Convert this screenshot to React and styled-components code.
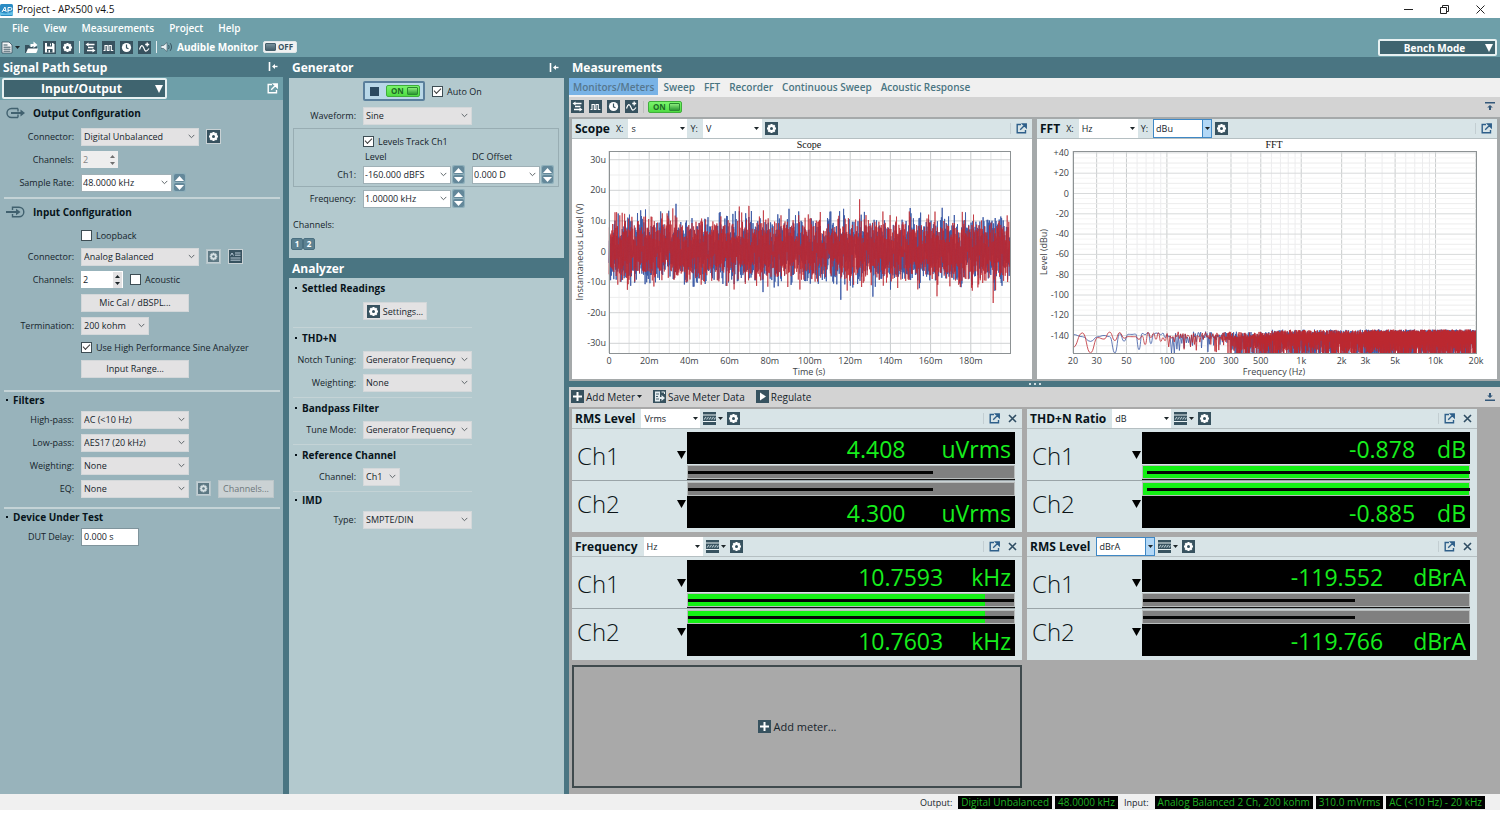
import React from "react";
import styled, { createGlobalStyle, css } from "styled-components";

const c = {
  bar: "#6e9fa9",
  head: "#4a7582",
  deep: "#3f646f",
  left: "#98b3bb",
  mid: "#b3c9ce",
  pane: "#d8e4e7",
  icon: "#37525f",
  ink: "#16242b",
  control: "#e3e2e3",
  green: "#14f014",
  value: "#17ee1d",
};

const Global = createGlobalStyle`
  *, *::before, *::after { box-sizing: border-box; }
  body { margin: 0; background: #fff; }
  body, button, input, select {
    font-family: "Open Sans", "Noto Sans", sans-serif;
    font-size: 9px;
    color: ${c.ink};
  }
  button, input, select { margin: 0; padding: 0; border-radius: 0; }
  h1, h2, h3, p { margin: 0; }
  svg { display: block; flex: none; }
`;

/* ---------- window frame ---------- */

const Window = styled.div`
  display: flex;
  flex-direction: column;
  min-width: 1180px;
`;
const TitleBar = styled.header`
  display: flex;
  align-items: center;
  gap: 4px;
  height: 18px;
  padding: 0 14px 0 0;
  background: #fff;
`;
const AppTitle = styled.h1`
  flex: 1;
  font-size: 10px;
  font-weight: 400;
  color: #111;
`;
const WindowButton = styled.button`
  display: grid;
  place-items: center;
  width: 12px;
  height: 14px;
  margin-left: 20px;
  border: 0;
  background: none;
`;
const CommandArea = styled.div`
  display: flex;
  align-items: flex-end;
  justify-content: space-between;
  height: 39px;
  padding-right: 3px;
  background: ${c.bar};
`;
const Menu = styled.nav`
  display: flex;
  align-items: center;
  gap: 15px;
  height: 20px;
  padding-left: 12px;
`;
const MenuLink = styled.a`
  font-size: 10px;
  font-weight: 600;
  color: #fff;
  text-decoration: none;
`;
const ToolRow = styled.div`
  display: flex;
  align-items: center;
  height: 18px;
  margin-bottom: 1px;
  gap: 5px;
  padding-left: 1px;
`;
const IconButton = styled.button`
  display: flex;
  align-items: center;
  gap: ${(p) => (p.$strong ? "4px" : "2px")};
  padding: 0;
  border: 0;
  background: none;
  font-size: 10px;
  color: ${(p) => p.$color || c.ink};
  ${(p) => p.$strong && css`font-weight: 700;`}
`;
const Separator = styled.span`
  width: 1px;
  height: 12px;
  margin-right: -1px;
  background: ${(p) => p.$color || "#e6eef0"};
`;
const ModeSelect = styled.button`
  display: flex;
  align-items: center;
  width: ${(p) => p.$width};
  height: ${(p) => p.$height};
  margin: ${(p) => p.$margin || 0};
  padding: 0 2px 0 4px;
  border: 2px solid #e8f1f2;
  border-radius: 2px;
  background: ${c.deep};
  color: #fff;
  font-size: ${(p) => p.$size};
  font-weight: 700;
  line-height: 12px;
  span { flex: 1; text-align: center; }
`;

/* ---------- columns ---------- */

const Columns = styled.main`
  display: grid;
  grid-template-columns: 289px 280px minmax(600px, 1fr);
  background: ${c.head};
`;
const Column = styled.section`
  display: flex;
  flex-direction: column;
  min-width: 0;
  border-right: ${(p) => p.$edge || "0"} solid ${c.head};
  background: ${(p) => p.$bg};
`;
const Heading = styled.h2`
  display: flex;
  align-items: center;
  justify-content: space-between;
  height: ${(p) => p.$height || "20px"};
  padding: 0 5px 0 3px;
  background: ${c.head};
  color: #fff;
  font-size: 12px;
  font-weight: 700;
`;
const PathBar = styled.div`
  display: flex;
  align-items: center;
  justify-content: space-between;
  height: 23px;
  padding: 0 5px 0 2px;
  background: ${c.bar};
`;
const Group = styled.section`
  margin: 0 ${(p) => p.$right || "3px"} 0 4px;
  padding-bottom: ${(p) => p.$bottom || "3px"};
  border-bottom: ${(p) => (p.$last ? "0" : p.$line || "2px")} solid #c4d3d6;
`;
const GroupTitle = styled.h3`
  display: flex;
  align-items: center;
  gap: ${(p) => (p.$icon ? "8px" : "5px")};
  height: ${(p) => p.$height};
  padding-left: 2px;
  font-size: 10px;
  font-weight: 700;
  color: #07131a;
  &::before {
    content: "";
    display: ${(p) => (p.$icon ? "none" : "block")};
    width: 2px;
    height: 2px;
    background: #07131a;
  }
`;
const Field = styled.div`
  display: flex;
  align-items: center;
  height: ${(p) => p.$height || "23px"};
  gap: 7px;
`;
const FieldLabel = styled.label`
  width: ${(p) => p.$width || "70px"};
  flex: none;
  text-align: right;
  white-space: nowrap;
`;
const Indent = styled.span`
  width: ${(p) => p.$width || "70px"};
  flex: none;
`;
const SelectBox = styled.span`
  position: relative;
  display: flex;
  width: ${(p) => p.$width};
  height: 18px;
  flex: none;
  svg { position: absolute; right: 4px; top: 6px; pointer-events: none; }
  select {
    appearance: none;
    width: 100%;
    padding: 0 2px;
    border: 1px solid #d4d8da;
    background: ${c.control};
  }
`;
const ComboBox = styled.span`
  display: flex;
  align-items: center;
  width: ${(p) => p.$width};
  height: 18px;
  padding-right: 3px;
  border: 1px solid #9fb0b6;
  background: #fff;
  input {
    flex: 1;
    min-width: 0;
    height: 14px;
    padding-left: 1px;
    border: 0;
    background: none;
  }
  button { border: 0; background: none; }
`;
const TextBox = styled.input`
  width: ${(p) => p.$width};
  height: 18px;
  padding-left: 2px;
  border: 1px solid #7f949c;
  background: #fff;
`;
const NumberBox = styled.span`
  display: flex;
  align-items: center;
  justify-content: space-between;
  width: ${(p) => p.$width};
  height: 17px;
  padding-right: 1px;
  background: ${(p) => (p.$off ? "#eeeeee" : "#fff")};
  input {
    width: 18px;
    height: 15px;
    padding-left: 2px;
    border: 0;
    background: none;
    color: ${(p) => (p.$off ? "#858585" : c.ink)};
  }
`;
const PushButton = styled.button`
  display: flex;
  align-items: center;
  justify-content: center;
  gap: 3px;
  width: ${(p) => p.$width};
  height: 18px;
  border: 1px solid #d3d7d9;
  background: ${c.control};
  &:disabled { color: #6d777b; background: #cbd2d4; border-color: #bcc6c9; }
`;
const SquareButton = styled.button`
  display: grid;
  place-items: center;
  width: 15px;
  height: 15px;
  border: 1px solid #c9d2d5;
  background: #dfe3e5;
  &:disabled { opacity: 0.6; }
`;
const CheckLabel = styled.label`
  display: flex;
  align-items: center;
  gap: 4px;
  white-space: nowrap;
  input {
    appearance: none;
    display: grid;
    place-items: center;
    width: 11px;
    height: 11px;
    border: 1px solid #3d4d54;
    background: #fff;
  }
  input:checked::before {
    content: "";
    width: 7px;
    height: 4px;
    margin-top: -2px;
    border: solid #3c3c3c;
    border-width: 0 0 1px 1px;
    transform: rotate(-45deg);
  }
`;
const Stepper = styled.span`
  display: grid;
  grid-template-rows: 8px 8px;
  gap: 1px;
  width: 13px;
  margin-left: -6px;
  padding: 1px;
  height: 19px;
  border-radius: 2px;
  background: #8fb0bb;
  button {
    display: grid;
    place-items: center;
    border: 0;
    border-radius: 2px;
    background: #64889a;
  }
`;
const OutputSwitch = styled.div`
  display: flex;
  align-items: center;
  justify-content: space-between;
  width: 62px;
  height: 20px;
  padding: 0 3px 0 5px;
  border: 2px solid #5a7f9c;
  border-radius: 2px;
  background: #b9d8e8;
`;
const StopMark = styled.button`
  width: 9px;
  height: 9px;
  border: 0;
  background: #2b4a60;
`;
const Toggle = styled.button`
  display: flex;
  align-items: center;
  justify-content: space-between;
  flex-direction: ${(p) => (p.$on ? "row" : "row-reverse")};
  width: 34px;
  height: 12px;
  padding: 0 1px 0 4px;
  border: 1px solid ${(p) => (p.$on ? "#3fae3a" : "#dfe6e8")};
  border-radius: 2px;
  background: ${(p) => (p.$on ? "linear-gradient(#7af56c, #4fdc43)" : "#f0f2f2")};
  color: ${(p) => (p.$on ? "#1c6a26" : "#37525f")};
  font-size: 8px;
  font-weight: 700;
  line-height: 10px;
  ${(p) => !p.$on && css`padding: 0 3px 0 1px;`}
  &::after {
    content: "";
    width: 11px;
    height: 8px;
    border: 1px solid ${(p) => (p.$on ? "#2a8a31" : "#455f6b")};
    border-radius: 1px;
    background: ${(p) => (p.$on ? "linear-gradient(#8bea7c, #2d9a34)" : "linear-gradient(#76909a, #455f6b)")};
  }
`;
const LevelBox = styled.fieldset`
  min-width: 0;
  margin: 1px 5px 0 4px;
  padding: 2px 0 0;
  border: 1px solid #98adb3;
`;
const LevelHeads = styled.div`
  display: grid;
  grid-template-columns: 107px auto;
  height: 12px;
  padding-left: 71px;
  line-height: 12px;
`;
const ChannelBlock = styled.div`
  padding: 8px 0 8px 2px;
  p { height: 16px; padding-left: 2px; line-height: 14px; }
`;
const ChannelKeys = styled.div`
  display: flex;
  padding-top: 4px;
  button {
    width: 12px;
    height: 12px;
    border: 1px solid #4a6f80;
    border-radius: 2px;
    background: #5c8191;
    color: #fff;
    font-size: 8px;
    font-weight: 700;
    line-height: 10px;
  }
`;
const ColumnBody = styled.div`
  background: ${(p) => p.$bg};
`;

/* ---------- measurements ---------- */

const Tabs = styled.div`
  display: flex;
  height: 19px;
  background: #f0f0f0;
`;
const Tab = styled.button`
  height: 17px;
  padding: 0 4px 0 ${(p) => (p.$active ? "4px" : "5px")};
  border: 0;
  background: ${(p) => (p.$active ? "#79b3e6" : "none")};
  color: ${(p) => (p.$active ? "#55778f" : c.head)};
  font-size: 10px;
  font-weight: 600;
`;
const ToolStrip = styled.div`
  display: flex;
  align-items: center;
  gap: ${(p) => p.$gap || "5px"};
  height: 20px;
  padding: 0 5px 1px 2px;
  background: #d3d3d3;
`;
const Spring = styled.span`
  flex: 1;
`;
const GraphArea = styled.div`
  display: grid;
  grid-template-columns: 1fr 1fr;
  gap: 5px;
  padding: 2px 3px;
  background: #a5a9aa;
`;
const Pane = styled.article`
  min-width: 0;
  background: ${(p) => p.$bg || "#fff"};
`;
const PaneHead = styled.header`
  display: flex;
  align-items: center;
  height: 20px;
  padding: 0 5px 0 3px;
  border-bottom: 1px solid #b5bfc2;
  background: ${c.pane};
  h3 { margin-right: 6px; font-size: 12px; font-weight: 700; color: #07131a; }
  label { margin-right: 5px; }
`;
const UnitBox = styled.span`
  position: relative;
  display: flex;
  width: 59px;
  height: 19px;
  margin-right: 3px;
  select {
    appearance: none;
    width: 100%;
    padding: 0 ${(p) => (p.$focus ? "2px" : "3px")};
    border: ${(p) => (p.$focus ? "1px solid #3f88c5" : "0")};
    background: #fff;
  }
  span {
    position: absolute;
    top: 0;
    right: 0;
    display: grid;
    place-items: center;
    width: 10px;
    height: 19px;
    border: ${(p) => (p.$focus ? "1px solid #3f88c5" : "0")};
    background: ${(p) => (p.$focus ? "#b3d8f6" : "none")};
    pointer-events: none;
  }
`;
const HeadTools = styled.div`
  display: flex;
  align-items: center;
  gap: 8px;
  margin-left: auto;
  padding-left: 5px;
  border-left: 1px solid #c3ced2;
`;
const Chart = styled.svg`
  width: 100%;
  height: auto;
  text { font-size: 9px; fill: #3d4347; }
  .title { font-family: "Liberation Serif", serif; font-size: 10px; fill: #111; }
`;
const Splitter = styled.div`
  display: grid;
  place-items: center;
  height: 6px;
  background: ${c.head};
`;
const MeterArea = styled.div`
  display: grid;
  grid-template-columns: 1fr 1fr;
  gap: 5px;
  padding: 2px 23px 6px 3px;
  background: #a9a9a9;
`;
const MeterBody = styled.div`
  padding: 3px 7px 4px 0;
`;
const MeterRow = styled.div`
  display: grid;
  grid-template-columns: 115px 1fr;
  height: 48px;
  & + & { border-top: 1px solid #9aa4a8; }
`;
const ChannelName = styled.div`
  display: flex;
  align-items: center;
  justify-content: space-between;
  padding: 0 1px 2px 5px;
  font-size: 24px;
  font-weight: 300;
  color: #0c1418;
`;
const Readout = styled.div`
  display: flex;
  flex-direction: ${(p) => (p.$flip ? "column-reverse" : "column")};
  justify-content: space-between;
  border-${(p) => (p.$flip ? "top: 1px solid #c9d2d4" : "bottom: 1px solid #111")};
`;
const Value = styled.output`
  display: flex;
  align-items: center;
  justify-content: flex-end;
  gap: ${(p) => p.$gap};
  height: 32px;
  padding: 2px 4px 0 0;
  background: #000;
  color: ${c.value};
  font-size: 23px;
  line-height: 30px;
  white-space: nowrap;
`;
const Track = styled.div`
  position: relative;
  height: 14px;
  border: 1px solid #b9bdbd;
  background: #808080;
`;
const Fill = styled.div`
  height: 100%;
  background: ${c.green};
`;
const Line = styled.div`
  position: absolute;
  top: 5px;
  left: ${(p) => p.$start || 0};
  height: 3px;
  background: #050505;
`;
const AddCell = styled.button`
  display: flex;
  align-items: center;
  justify-content: center;
  gap: 3px;
  height: 123px;
  border: 2px solid #3f4a4d;
  background: #a9a9a9;
  font-size: 11px;
`;
const StatusBar = styled.footer`
  display: flex;
  align-items: center;
  justify-content: flex-end;
  gap: 3px;
  height: 16px;
  padding-right: 15px;
  background: #f0f0f0;
  font-size: 9px;
  span { margin: 0 3px; }
`;
const StatusValue = styled.output`
  height: 13px;
  padding: 0 3px;
  background: #000;
  color: #1fae22;
  font-size: 10px;
  line-height: 12px;
`;

/* ---------- icons ---------- */

const Tile = ({ children, size = 13, bg = c.icon }) => (
  <svg width={size} height={size} viewBox="0 0 13 13" aria-hidden="true">
    <rect width="13" height="13" fill={bg} />
    {children}
  </svg>
);
const Gear = ({ bg = c.icon, size }) => (
  <Tile bg={bg} size={size}>
    {[0, 45, 90, 135].map((a) => (
      <rect key={a} x="5.4" y="2" width="2.2" height="9" fill="#fff" transform={`rotate(${a} 6.5 6.5)`} />
    ))}
    <circle cx="6.5" cy="6.5" r="3.5" fill="#fff" />
    <circle cx="6.5" cy="6.5" r="1.5" fill={bg} />
  </Tile>
);
const Swap = () => (
  <Tile>
    <path d="M4 3.500h6.500M4 6.500h5.500M3 9.500h6" stroke="#fff" strokeWidth="1.400" fill="none" />
    <path d="M1.500 3.500L4.500 1.500v4zM11.500 9.500l-3-2v4z" fill="#fff" />
  </Tile>
);
const Square = () => (
  <Tile>
    <path d="M1.500 9.500h1.500v-5h2.300v5h1.700v-5h2.300v5h2" stroke="#fff" strokeWidth="1.1" fill="none" />
  </Tile>
);
const Clock = () => (
  <Tile>
    <circle cx="6.5" cy="6.5" r="4.600" fill="#fff" />
    <path d="M6.500 3.500v3.300l2 1" stroke={c.icon} strokeWidth="1.200" fill="none" />
  </Tile>
);
const Sine = () => (
  <Tile>
    <path d="M1.500 8.500c1.500-5 3-5 4.300-1.500s2.200 4.500 5.200.5" stroke="#fff" strokeWidth="1.200" fill="none" />
    <path d="M9.200 1.500v4M7.200 3.500h4" stroke="#fff" strokeWidth="1.300" />
  </Tile>
);
const NewDoc = () => (
  <svg width="12" height="13" viewBox="0 0 12 13" aria-hidden="true">
    <path d="M1 1h7l3 3v8H1z" fill="#f4f7f8" stroke={c.icon} strokeWidth=".8" />
    <path d="M2.500 4h4M2.500 6.200h7M2.500 8.200h7M2.500 10.200h7" stroke={c.icon} strokeWidth="1" />
  </svg>
);
const OpenDoc = () => (
  <svg width="13" height="13" viewBox="0 0 13 13" aria-hidden="true">
    <path d="M0 4h4l1 1.500h7V12H0z" fill={c.icon} />
    <path d="M1 12l2-4.500h10L11.500 12z" fill="#fff" />
    <path d="M5.500 6V3h3V.500L12.500 4 8.500 7V5H7.500v1z" fill="#fff" />
  </svg>
);
const Save = () => (
  <Tile>
    <path d="M2 2h8l1.500 1.500V11.500H2z" fill="#fff" />
    <path d="M4 2h5v3.500H4zM4 8h5.500v3.500H4z" fill={c.icon} />
    <path d="M7 2.500h1v2H7zM5.500 9h1.500v2.500H5.500z" fill="#fff" />
  </Tile>
);
const Speaker = () => (
  <svg width="12" height="12" viewBox="0 0 12 12" aria-hidden="true">
    <path d="M0 4.500h2.500L6 1.500v9L2.500 7.500H0z" fill="#e8f0f2" stroke={c.icon} strokeWidth=".6" />
    <path d="M7.500 4c.8 1.200.8 2.800 0 4M9.200 2.200c1.700 2.200 1.700 5.400 0 7.600" stroke={c.icon} fill="none" />
  </svg>
);
const PopOut = ({ color = "#2e5f8a" }) => (
  <svg width="11" height="11" viewBox="0 0 11 11" aria-hidden="true">
    <path d="M5 1.500H1.200v8.300h8.300V7" stroke={color} strokeWidth="1.400" fill="none" />
    <path d="M6.500 1h3.800v3.800zM4.200 6.800l4-4" stroke={color} strokeWidth="1.300" fill={color} />
  </svg>
);
const Collapse = () => (
  <svg width="10" height="10" viewBox="0 0 10 10" aria-hidden="true">
    <path d="M1.500 0v9" stroke="#fff" strokeWidth="1.600" />
    <path d="M6 4.500h3.500" stroke="#fff" strokeWidth="1.400" />
    <path d="M4 4.500l3-2.500v5z" fill="#fff" />
  </svg>
);
const Fold = ({ up }) => (
  <svg width="10" height="9" viewBox="0 0 10 9" aria-hidden="true">
    <g transform={up ? "rotate(180 5 4.500)" : undefined} fill="#33587a">
      <path d="M0 0h10v1.600H0zM5 3l2.800 2.600H6V8H4V5.600H2.200z" />
    </g>
  </svg>
);
const Close = () => (
  <svg width="9" height="9" viewBox="0 0 9 9" aria-hidden="true">
    <path d="M1 1l7 7M8 1L1 8" stroke="#2f4d63" strokeWidth="1.600" />
  </svg>
);
const Chevron = () => (
  <svg width="7" height="5" viewBox="0 0 7 5" aria-hidden="true">
    <path d="M.7.9l2.800 2.800L6.300.9" stroke="#5f676b" strokeWidth="1" fill="none" />
  </svg>
);
const Caret = ({ w = 5, h = 3, color = "#1d2529", up }) => (
  <svg width={w} height={h} viewBox="0 0 10 10" preserveAspectRatio="none" aria-hidden="true">
    <path d={up ? "M0 10h10L5 0z" : "M0 0h10L5 10z"} fill={color} />
  </svg>
);
const MeterView = () => (
  <Tile>
    <path d="M0 2.500h13v1H0zM0 9h13v1H0z" fill="#e8f0f2" />
    <path d="M1 7.500l2-2.500M3.500 7.500l2-2.500M6 7.500l2-2.500M8.500 7.500l2-2.500M11 7.500l1.500-2" stroke="#b9cad0" strokeWidth="1.100" fill="none" />
  </Tile>
);
const Teds = () => (
  <Tile size={13}>
    <path d="M1.500 5.500L3 3l1.500 2.500M6 3h5.500M6 5.200h5.500M1.500 8h10M1.500 10.200h10" stroke="#b9cad6" strokeWidth="1" fill="none" />
  </Tile>
);
const Plus = ({ size }) => (
  <Tile size={size}>
    <path d="M6.500 2v9M2 6.500h9" stroke="#fff" strokeWidth="2" />
  </Tile>
);
const Export = () => (
  <Tile>
    <path d="M2 1.500h5v10H2z" fill="#e5edf0" />
    <path d="M3 4h3M3 6.500h2M3 9h3" stroke={c.icon} strokeWidth=".9" />
    <path d="M6 7h2.500V5l3.500 3-3.500 3V9H6z" fill="#e5edf0" />
    <path d="M8.500 2h3v2" stroke="#e5edf0" fill="none" />
  </Tile>
);
const Play = () => (
  <Tile>
    <path d="M4 2.500l6 4-6 4z" fill="#fff" />
  </Tile>
);
const OutIcon = () => (
  <svg width="19" height="12" viewBox="0 0 19 12" aria-hidden="true">
    <path d="M12 1.500H5.500a4.500 4.500 0 0 0 0 9H12" stroke="#41616f" strokeWidth="1.400" fill="none" />
    <path d="M12 1.500v3M12 7.500v3" stroke="#41616f" strokeWidth="1.400" />
    <path d="M5 6h12" stroke="#41616f" strokeWidth="2" />
    <path d="M14.500 2.500L19 6l-4.500 3.500z" fill="#41616f" />
  </svg>
);
const InIcon = () => (
  <svg width="19" height="12" viewBox="0 0 19 12" aria-hidden="true">
    <path d="M6.500 4V1.200H13a4.800 4.800 0 0 1 0 9.600H6.500V8" stroke="#41616f" strokeWidth="1.400" fill="none" />
    <path d="M0 6h12" stroke="#41616f" strokeWidth="2" />
    <path d="M10 2.800L14.500 6 10 9.200z" fill="#41616f" />
  </svg>
);
const Logo = () => (
  <svg width="13" height="13" viewBox="0 0 13 13" aria-hidden="true">
    <rect y="1" width="13" height="12" rx="1.500" fill="#2b8cc4" />
    <path d="M0 9c3 2 9 2 13-1v4H0z" fill="#63bfe6" />
    <path d="M2 9l3-5 1.200 5M3.300 7.500h2.500M8 9.500V4.500h2.500a1.300 1.300 0 0 1 0 2.800H8" stroke="#fff" strokeWidth="1" fill="none" />
  </svg>
);

/* ---------- small composed controls ---------- */

const Select = ({ id, value, width }) => (
  <SelectBox $width={width}>
    <select id={id} defaultValue={value}>
      <option>{value}</option>
    </select>
    <Chevron />
  </SelectBox>
);
const Combo = ({ id, value, width, label }) => (
  <ComboBox $width={width}>
    <input id={id} defaultValue={value} aria-label={label} />
    <button aria-label="Show choices"><Chevron /></button>
  </ComboBox>
);
const Steps = () => (
  <Stepper>
    <button aria-label="Increase"><Caret up w={9} h={5} color="#fff" /></button>
    <button aria-label="Decrease"><Caret w={9} h={5} color="#fff" /></button>
  </Stepper>
);
const SpinWrap = styled.span`
  display: grid;
  gap: 4px;
  padding: 3px 2px;
  background: ${(p) => (p.$off ? "none" : "#e3e2e3")};
`;
const Spin = ({ id, value, off, width }) => (
  <NumberBox $off={off} $width={width}>
    <input id={id} defaultValue={value} disabled={off} />
    <SpinWrap $off={off}>
      <Caret up color={off ? "#707070" : undefined} />
      <Caret color={off ? "#707070" : undefined} />
    </SpinWrap>
  </NumberBox>
);
const Check = ({ children, on }) => (
  <CheckLabel>
    <input type="checkbox" defaultChecked={on} />
    {children}
  </CheckLabel>
);
const Unit = ({ id, value, focus, label }) => (
  <UnitBox $focus={focus}>
    <select id={id} defaultValue={value} aria-label={label}>
      <option>{value}</option>
    </select>
    <span><Caret w={5} h={3} /></span>
  </UnitBox>
);
const SelectField = ({ id, label, value, width, labelWidth }) => (
  <Field>
    <FieldLabel htmlFor={id} $width={labelWidth}>{label}</FieldLabel>
    <Select id={id} value={value} width={width} />
  </Field>
);

/* ---------- chart data ---------- */

const random = (seed) => {
  let s = seed;
  return () => {
    s = (s * 1664525 + 1013904223) % 4294967296;
    return s / 4294967296;
  };
};
const bell = (r) => r() + r() + r() + r() + r() + r() - 3;

const scopeTrace = (seed) => {
  const r = random(seed);
  const pts = [];
  const n = 1000;
  for (let i = 0; i <= n; i++) {
    const sign = i % 2 ? 1 : -1;
    const spike = r() < 0.03 ? 4 : 0;
    const level = sign * (6.6 + bell(r) * 3.8 + spike) + 0.4;
    pts.push(`${(37 + (401 * i) / n).toFixed(1)},${(112.5 - level * 3.06).toFixed(1)}`);
  }
  return pts.join(" ");
};
const fx = (f) => 36 + (403 * Math.log10(f / 20)) / 3;
const fy = (db) => 54.500 - db * 1.015;
const fftTrace = (seed) => {
  const r = random(seed);
  const pts = [];
  let f = 20;
  let i = 0;
  while (f < 20000) {
    const high = -134 - r() * (f > 3000 ? 3 : 6) - (f < 600 ? 2 : 0);
    const reach = f > 3000 ? 12 + r() * 18 : f > 300 ? 5 + r() * 22 : r() < 0.35 ? 6 + r() * 14 : r() * 6;
    const db = i % 2 ? high : high - reach;
    pts.push([fx(f), Math.min(214, fy(db))]);
    f += Math.max(f < 100 ? 3.5 : 2.6, f * 0.0042);
    i += 1;
  }
  /* Widely spaced low-frequency bins are joined by curves, the rest by lines. */
  let d = `M${pts[0][0].toFixed(1)} ${pts[0][1].toFixed(1)}`;
  for (let k = 1; k < pts.length; k++) {
    const [x0] = pts[k - 1];
    const y0 = pts[k - 1][1];
    const [x, y] = pts[k];
    if (x - x0 > 2) {
      const m = ((x0 + x) / 2).toFixed(1);
      d += `C${m} ${y0.toFixed(1)} ${m} ${y.toFixed(1)} ${x.toFixed(1)} ${y.toFixed(1)}`;
    } else {
      d += `L${x.toFixed(1)} ${y.toFixed(1)}`;
    }
  }
  return d;
};

const ScopeChart = () => {
  const xs = Array.from({ length: 10 }, (_, i) => i);
  const ys = [30, 20, 10, 0, -10, -20, -30];
  return (
    <Chart viewBox="0 0 460 240" role="img" aria-label="Scope">
      {xs.map((i) => (
        <g key={i}>
          <path d={`M${37 + i * 40.200} 12v202`} stroke="#c9cccd" />
          <path d={`M${57.100 + i * 40.200} 12v202`} stroke="#e0e2e3" />
          <path d={`M${47 + i * 40.200} 12v202M${67.200 + i * 40.200} 12v202`} stroke="#f3f4f4" />
        </g>
      ))}
      {ys.map((v) => (
        <g key={v}>
          <path d={`M37 ${112.500 - v * 3.060}h401`} stroke="#d0d3d4" />
          {v > -30 && <path d={`M37 ${127.800 - v * 3.060}h401`} stroke="#ededed" />}
        </g>
      ))}
      <polyline points={scopeTrace(11)} fill="none" stroke="#3c5aa6" strokeWidth=".9" />
      <polyline points={scopeTrace(87)} fill="none" stroke="#bd2830" strokeWidth=".7" />
      <rect x="37.500" y="12.500" width="401" height="202" fill="none" stroke="#8d9294" />
      <text className="title" x="237" y="9" textAnchor="middle">Scope</text>
      {ys.map((v) => (
        <text key={v} x="34" y={115.500 - v * 3.060} textAnchor="end">{v === 0 ? "0" : `${v}u`}</text>
      ))}
      {xs.map((i) => (
        <text key={i} x={37 + i * 40.200} y="225" textAnchor="middle">{i === 0 ? "0" : `${i * 20}m`}</text>
      ))}
      <text x="237" y="236" textAnchor="middle">Time (s)</text>
      <text transform="translate(11 113) rotate(-90)" textAnchor="middle">Instantaneous Level (V)</text>
    </Chart>
  );
};

const FftChart = () => {
  const major = [[20, "20"], [30, "30"], [50, "50"], [100, "100"], [200, "200"], [300, "300"], [500, "500"], [1000, "1k"], [2000, "2k"], [3000, "3k"], [5000, "5k"], [10000, "10k"], [20000, "20k"]];
  const minor = [40, 60, 70, 80, 90, 400, 600, 700, 800, 900, 4000, 6000, 7000, 8000, 9000];
  const ys = [40, 20, 0, -20, -40, -60, -80, -100, -120, -140];
  return (
    <Chart viewBox="0 0 460 240" role="img" aria-label="FFT">
      {minor.map((f) => <path key={f} d={`M${fx(f)} 12v202`} stroke="#ececee" />)}
      {major.map(([f]) => <path key={f} d={`M${fx(f)} 12v202`} stroke="#c9cccd" />)}
      {ys.map((v) => (
        <g key={v}>
          <path d={`M36 ${fy(v)}h403`} stroke="#d8dadb" />
          <path d={`M36 ${fy(v) + 10.150}h403`} stroke="#ececec" />
          {v > -140 && <path d={`M36 ${fy(v) + 5}h403M36 ${fy(v) + 15}h403`} stroke="#f5f5f5" />}
        </g>
      ))}
      <path d={fftTrace(5)} fill="none" stroke="#3c5aa6" strokeWidth=".8" strokeLinejoin="round" />
      <path d={fftTrace(42)} fill="none" stroke="#bd2830" strokeWidth=".8" strokeLinejoin="round" />
      <rect x="36.500" y="12.500" width="403" height="202" fill="none" stroke="#8d9294" />
      <text className="title" x="237" y="9" textAnchor="middle">FFT</text>
      {ys.map((v) => (
        <text key={v} x="32" y={fy(v) + 3} textAnchor="end">{v > 0 ? `+${v}` : v}</text>
      ))}
      {major.map(([f, t]) => (
        <text key={f} x={fx(f)} y="225" textAnchor="middle">{t}</text>
      ))}
      <text x="237" y="236" textAnchor="middle">Frequency (Hz)</text>
      <text transform="translate(10 113) rotate(-90)" textAnchor="middle">Level (dBu)</text>
    </Chart>
  );
};

const graphs = [
  { id: "scope", title: "Scope", x: "s", y: "V", Plot: ScopeChart },
  { id: "fft", title: "FFT", x: "Hz", y: "dBu", focus: true, Plot: FftChart },
];

const meters = [
  { title: "RMS Level", unit: "Vrms", values: ["4.408", "4.300"], suffix: "uVrms", gap: "36px", fill: 0, line: 75 },
  { title: "THD+N Ratio", unit: "dB", values: ["-0.878", "-0.885"], suffix: "dB", gap: "22px", fill: 100, line: 99, start: "4px" },
  { title: "Frequency", unit: "Hz", values: ["10.7593", "10.7603"], suffix: "kHz", gap: "28px", fill: 91, line: 100 },
  { title: "RMS Level", unit: "dBrA", values: ["-119.552", "-119.766"], suffix: "dBrA", gap: "30px", fill: 0, line: 65, focus: true },
];

const Spacer = styled.span`
  width: 4px;
`;

const Meter = ({ m }) => (
  <Pane $bg={c.pane}>
    <PaneHead>
      <h3>{m.title}</h3>
      <Unit value={m.unit} focus={m.focus} label={`${m.title} unit`} />
      <IconButton aria-label="Meter display"><MeterView /><Caret /></IconButton>
      <Spacer />
      <IconButton aria-label="Meter settings"><Gear /></IconButton>
      <HeadTools>
        <IconButton aria-label="Open in window"><PopOut /></IconButton>
        <IconButton aria-label="Close meter"><Close /></IconButton>
      </HeadTools>
    </PaneHead>
    <MeterBody>
      {m.values.map((v, i) => (
        <MeterRow key={v}>
          <ChannelName>
            <span>Ch{i + 1}</span>
            <Caret w={9} h={8} color="#000" />
          </ChannelName>
          <Readout $flip={i === 1}>
            <Value $gap={m.gap}><span>{v}</span><span>{m.suffix}</span></Value>
            <Track>
              <Fill style={{ width: `${m.fill}%` }} />
              <Line $start={m.start} style={{ width: `${m.line}%` }} />
            </Track>
          </Readout>
        </MeterRow>
      ))}
    </MeterBody>
  </Pane>
);

const tabs = ["Monitors/Meters", "Sweep", "FFT", "Recorder", "Continuous Sweep", "Acoustic Response"];

const GEN = "63px";

export default function App() {
  return (
    <>
      <Global />
      <Window>
        <TitleBar>
          <Logo />
          <AppTitle>Project - APx500 v4.5</AppTitle>
          <WindowButton aria-label="Minimize">
            <svg width="9" height="9" viewBox="0 0 9 9"><path d="M0 4.500h9" stroke="#222" /></svg>
          </WindowButton>
          <WindowButton aria-label="Restore">
            <svg width="9" height="9" viewBox="0 0 9 9"><path d="M.5 2.500h6v6h-6zM2.500 2.500v-2h6v6h-2" stroke="#222" fill="none" /></svg>
          </WindowButton>
          <WindowButton aria-label="Close">
            <svg width="9" height="9" viewBox="0 0 9 9"><path d="M.5.5l8 8M8.500.5l-8 8" stroke="#222" /></svg>
          </WindowButton>
        </TitleBar>

        <CommandArea>
          <div>
            <Menu>
              {["File", "View", "Measurements", "Project", "Help"].map((t) => (
                <MenuLink key={t} href="#">{t}</MenuLink>
              ))}
            </Menu>
            <ToolRow>
              <IconButton aria-label="New"><NewDoc /><Caret /></IconButton>
              <IconButton aria-label="Open"><OpenDoc /></IconButton>
              <IconButton aria-label="Save"><Save /></IconButton>
              <IconButton aria-label="Settings"><Gear /></IconButton>
              <Separator />
              <IconButton aria-label="Signal path"><Swap /></IconButton>
              <IconButton aria-label="Waveform"><Square /></IconButton>
              <IconButton aria-label="Timer"><Clock /></IconButton>
              <IconButton aria-label="Add sweep"><Sine /></IconButton>
              <Separator />
              <IconButton $strong $color="#fff"><Speaker />Audible Monitor</IconButton>
              <Toggle aria-pressed="false">OFF</Toggle>
            </ToolRow>
          </div>
          <ModeSelect $width="119px" $height="17px" $size="10px" $margin="0 0 1px">
            <span>Bench Mode</span>
            <Caret w={8} h={8} color="#fff" />
          </ModeSelect>
        </CommandArea>

        <Columns>
          <Column $bg={c.left} $edge="6px">
            <Heading>Signal Path Setup <Collapse /></Heading>
            <PathBar>
              <ModeSelect $width="165px" $height="21px" $size="12px">
                <span>Input/Output</span>
                <Caret w={8} h={8} color="#fff" />
              </ModeSelect>
              <IconButton aria-label="Open in window"><PopOut color="#fff" /></IconButton>
            </PathBar>

            <Group>
              <GroupTitle $icon $height="25px"><OutIcon />Output Configuration</GroupTitle>
              <Field>
                <FieldLabel htmlFor="out-conn">Connector:</FieldLabel>
                <Select id="out-conn" value="Digital Unbalanced" width="118px" />
                <SquareButton aria-label="Connector settings"><Gear size={13} /></SquareButton>
              </Field>
              <Field>
                <FieldLabel htmlFor="out-ch">Channels:</FieldLabel>
                <Spin id="out-ch" value="2" off width="37px" />
              </Field>
              <Field>
                <FieldLabel htmlFor="rate">Sample Rate:</FieldLabel>
                <Combo id="rate" value="48.0000 kHz" width="91px" />
                <Steps />
              </Field>
            </Group>

            <Group $bottom="10px">
              <GroupTitle $icon $height="26px"><InIcon />Input Configuration</GroupTitle>
              <Field $height="20px"><Indent /><Check>Loopback</Check></Field>
              <Field>
                <FieldLabel htmlFor="in-conn">Connector:</FieldLabel>
                <Select id="in-conn" value="Analog Balanced" width="118px" />
                <SquareButton disabled aria-label="Connector settings"><Gear size={11} /></SquareButton>
                <SquareButton aria-label="Sensor data"><Teds /></SquareButton>
              </Field>
              <Field>
                <FieldLabel htmlFor="in-ch">Channels:</FieldLabel>
                <Spin id="in-ch" value="2" width="42px" />
                <Check>Acoustic</Check>
              </Field>
              <Field><Indent /><PushButton $width="108px">Mic Cal / dBSPL...</PushButton></Field>
              <SelectField id="term" label="Termination:" value="200 kohm" width="68px" />
              <Field $height="20px"><Indent /><Check on>Use High Performance Sine Analyzer</Check></Field>
              <Field><Indent /><PushButton $width="108px">Input Range...</PushButton></Field>
            </Group>

            <Group $bottom="7px">
              <GroupTitle $height="16px">Filters</GroupTitle>
              <SelectField id="hp" label="High-pass:" value="AC (<10 Hz)" width="108px" />
              <SelectField id="lp" label="Low-pass:" value="AES17 (20 kHz)" width="108px" />
              <SelectField id="wt" label="Weighting:" value="None" width="108px" />
              <Field>
                <FieldLabel htmlFor="eq">EQ:</FieldLabel>
                <Select id="eq" value="None" width="108px" />
                <SquareButton disabled aria-label="EQ settings"><Gear size={11} /></SquareButton>
                <PushButton disabled $width="56px">Channels...</PushButton>
              </Field>
            </Group>

            <Group $last>
              <GroupTitle $height="16px">Device Under Test</GroupTitle>
              <Field>
                <FieldLabel htmlFor="dut">DUT Delay:</FieldLabel>
                <TextBox id="dut" $width="58px" defaultValue="0.000 s" />
              </Field>
            </Group>
          </Column>

          <Column $bg={c.mid} $edge="5px">
            <Heading $height="21px">Generator <Collapse /></Heading>
            <ColumnBody $bg={c.mid}>
              <Group as="div" $last $right="0" $bottom="0">
                <Field $height="26px">
                  <Indent $width={GEN} />
                  <OutputSwitch>
                    <StopMark aria-label="Stop" />
                    <Toggle $on aria-pressed="true">ON</Toggle>
                  </OutputSwitch>
                  <Check on>Auto On</Check>
                </Field>
                <SelectField id="wave" label="Waveform:" value="Sine" width="109px" labelWidth={GEN} />
              </Group>
              <LevelBox>
                <Field $height="20px"><Indent $width="62px" /><Check on>Levels Track Ch1</Check></Field>
                <LevelHeads><span>Level</span><span>DC Offset</span></LevelHeads>
                <Field>
                  <FieldLabel htmlFor="lvl" $width="62px">Ch1:</FieldLabel>
                  <Combo id="lvl" value="-160.000 dBFS" width="88px" />
                  <Steps />
                  <Combo value="0.000 D" width="68px" label="DC Offset" />
                  <Steps />
                </Field>
              </LevelBox>
              <Group as="div" $last $right="0" $bottom="0">
                <Field>
                  <FieldLabel htmlFor="freq" $width={GEN}>Frequency:</FieldLabel>
                  <Combo id="freq" value="1.00000 kHz" width="88px" />
                  <Steps />
                </Field>
              </Group>
              <ChannelBlock>
                <p>Channels:</p>
                <ChannelKeys>
                  <button>1</button>
                  <button>2</button>
                </ChannelKeys>
              </ChannelBlock>
            </ColumnBody>

            <Heading>Analyzer</Heading>
            <Group $right="92px" $line="1px">
              <GroupTitle $height="20px">Settled Readings</GroupTitle>
              <Field $height="26px">
                <Indent $width={GEN} />
                <PushButton $width="64px"><Gear />Settings...</PushButton>
              </Field>
            </Group>
            <Group $right="92px" $line="1px">
              <GroupTitle $height="20px">THD+N</GroupTitle>
              <SelectField id="notch" label="Notch Tuning:" value="Generator Frequency" width="109px" labelWidth={GEN} />
              <SelectField id="aw" label="Weighting:" value="None" width="109px" labelWidth={GEN} />
            </Group>
            <Group $right="92px" $line="1px">
              <GroupTitle $height="20px">Bandpass Filter</GroupTitle>
              <SelectField id="tune" label="Tune Mode:" value="Generator Frequency" width="109px" labelWidth={GEN} />
            </Group>
            <Group $right="92px" $line="1px">
              <GroupTitle $height="20px">Reference Channel</GroupTitle>
              <SelectField id="refch" label="Channel:" value="Ch1" width="37px" labelWidth={GEN} />
            </Group>
            <Group $right="92px" $last>
              <GroupTitle $height="16px">IMD</GroupTitle>
              <SelectField id="imd" label="Type:" value="SMPTE/DIN" width="109px" labelWidth={GEN} />
            </Group>
          </Column>

          <Column $bg="#a9a9a9">
            <Heading $height="21px">Measurements</Heading>
            <Tabs role="tablist">
              {tabs.map((t, i) => (
                <Tab key={t} role="tab" $active={i === 0} aria-selected={i === 0}>{t}</Tab>
              ))}
            </Tabs>
            <ToolStrip>
              <IconButton aria-label="Signal path"><Swap /></IconButton>
              <IconButton aria-label="Waveform"><Square /></IconButton>
              <IconButton aria-label="Timer"><Clock /></IconButton>
              <IconButton aria-label="Add sweep"><Sine /></IconButton>
              <Separator $color="#bdbdbd" />
              <Toggle $on aria-pressed="true">ON</Toggle>
              <Spring />
              <IconButton aria-label="Collapse upward"><Fold /></IconButton>
            </ToolStrip>
            <GraphArea>
              {graphs.map(({ id, title, x, y, focus, Plot }) => (
                <Pane key={id}>
                  <PaneHead>
                    <h3>{title}</h3>
                    <label htmlFor={`${id}-x`}>X:</label>
                    <Unit id={`${id}-x`} value={x} />
                    <label htmlFor={`${id}-y`}>Y:</label>
                    <Unit id={`${id}-y`} value={y} focus={focus} />
                    <IconButton aria-label="Graph settings"><Gear /></IconButton>
                    <HeadTools>
                      <IconButton aria-label="Open in window"><PopOut /></IconButton>
                    </HeadTools>
                  </PaneHead>
                  <Plot />
                </Pane>
              ))}
            </GraphArea>
            <Splitter>
              <svg width="12" height="2" viewBox="0 0 12 2"><path d="M0 0h2v2H0zM5 0h2v2H5zM10 0h2v2h-2z" fill="#cfdde1" /></svg>
            </Splitter>
            <ToolStrip $gap="11px">
              <IconButton><Plus />Add Meter <Caret /></IconButton>
              <IconButton><Export />Save Meter Data</IconButton>
              <IconButton><Play />Regulate</IconButton>
              <Spring />
              <IconButton aria-label="Collapse downward"><Fold up /></IconButton>
            </ToolStrip>
            <MeterArea>
              {meters.map((m) => <Meter key={m.title + m.unit} m={m} />)}
              <AddCell><Plus />Add meter...</AddCell>
            </MeterArea>
          </Column>
        </Columns>

        <StatusBar>
          <span>Output:</span>
          <StatusValue>Digital Unbalanced</StatusValue>
          <StatusValue>48.0000 kHz</StatusValue>
          <span>Input:</span>
          <StatusValue>Analog Balanced 2 Ch, 200 kohm</StatusValue>
          <StatusValue>310.0 mVrms</StatusValue>
          <StatusValue>{"AC (<10 Hz) - 20 kHz"}</StatusValue>
        </StatusBar>
      </Window>
    </>
  );
}
